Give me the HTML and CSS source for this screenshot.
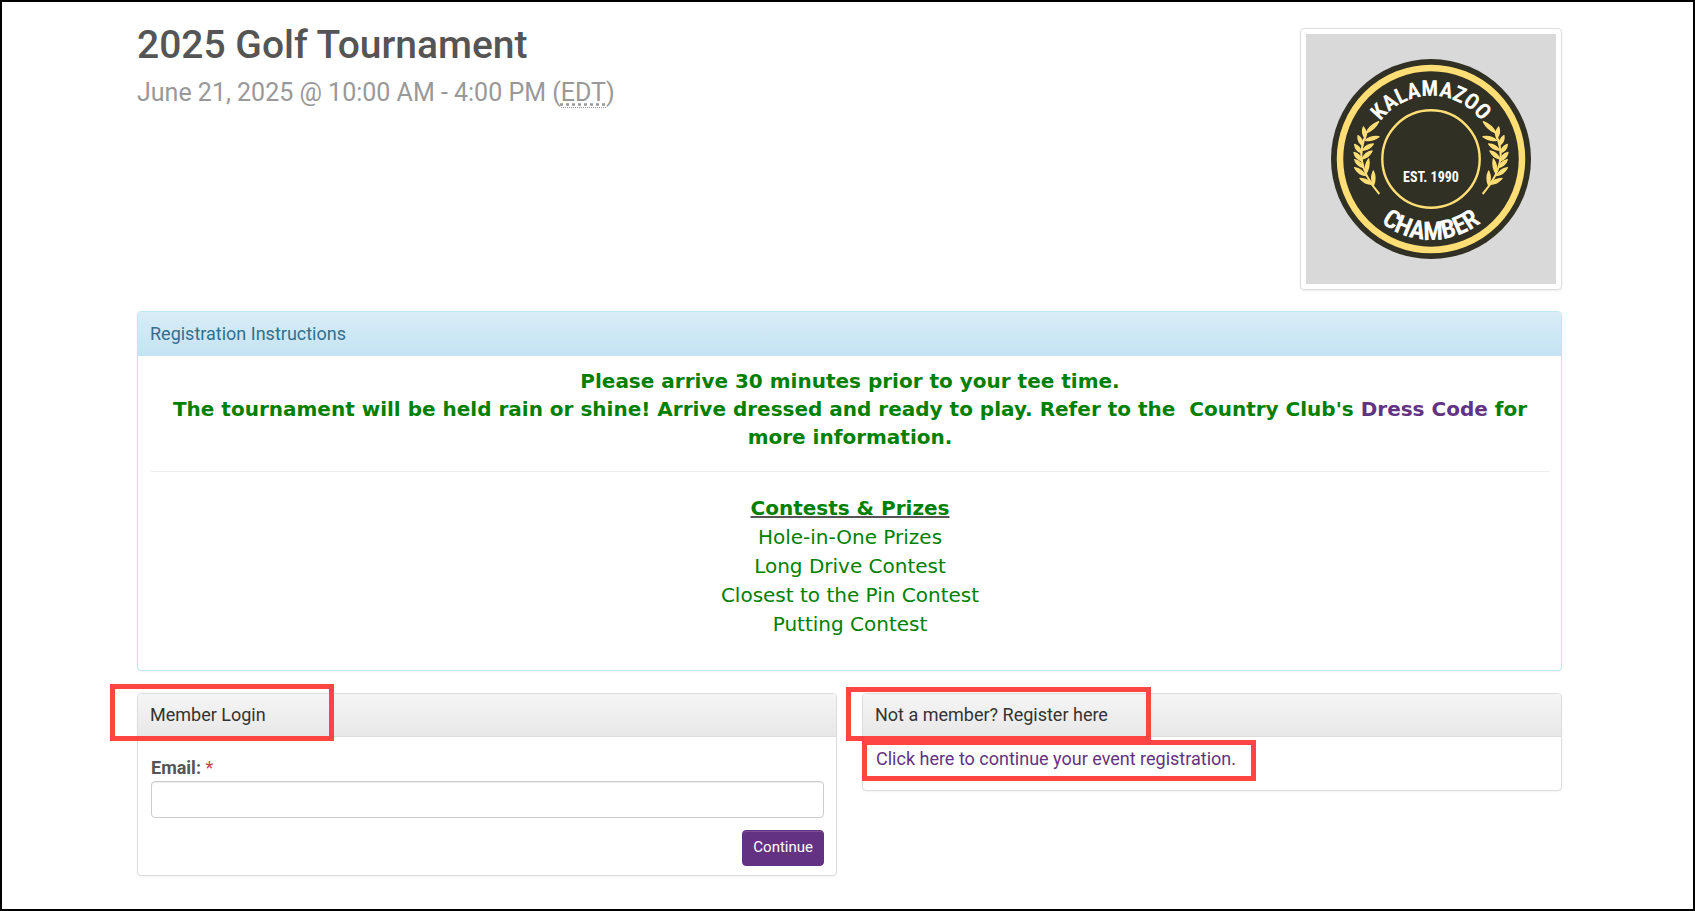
FILE: index.html
```html
<!DOCTYPE html>
<html lang="en">
<head>
<meta charset="utf-8">
<title>2025 Golf Tournament</title>
<meta name="viewport" content="width=device-width, initial-scale=1">
<link rel="stylesheet" href="styles.css">
</head>
<body>
<main class="page">
  <header class="event">
    <div class="event-text">
      <h1 class="event-title">2025 Golf Tournament</h1>
      <p class="event-date">June 21, 2025 @ 10:00 AM - 4:00 PM (<abbr class="zone" title="Eastern Daylight Time">EDT</abbr>)</p>
    </div>
    <div class="thumbnail">
      <svg class="logo" viewBox="0 0 250 250" role="img" aria-label="Kalamazoo Chamber, established 1990">
        <defs>
          <path id="arc-top" d="M62 125a63 63 0 0 1 126 0"/>
          <path id="arc-bottom" d="M44 125a81 81 0 0 0 162 0"/>
          <g id="laurel" transform="translate(44 81) scale(.3333)">
            <path fill="none" stroke="#ffdf75" stroke-width="6" d="M50 52Q30 100 35 134Q42 184 88 237"/>
            <path fill="#ffdf75" stroke="#ffdf75" stroke-width="4" stroke-linejoin="round" d="M48 54Q60 30 86 20Q74 44 48 54ZM46 76Q64 61 87 65Q68 79 46 76ZM46 70Q33 55 40 36Q53 51 46 70ZM38 92Q22 81 24 62Q40 73 38 92ZM38 106Q49 87 70 87Q59 105 38 106ZM35 114Q16 107 14 88Q32 95 35 114ZM36 132Q45 112 66 108Q57 128 36 132ZM36 138Q16 132 12 112Q32 118 36 138ZM40 158Q20 153 14 134Q34 139 40 158ZM47 178Q41 153 56 132Q61 157 47 178ZM46 182Q24 178 14 158Q36 162 46 182ZM70 212Q60 190 70 168Q80 190 70 212ZM66 208Q44 208 30 190Q52 190 66 208Z"/>
          </g>
        </defs>
        <circle cx="125" cy="125" r="100" fill="#313024"/>
        <circle cx="125" cy="125" r="91" fill="none" stroke="#ffdf75" stroke-width="6.5"/>
        <circle cx="125" cy="125" r="48.7" fill="none" stroke="#ffdf75" stroke-width="2.4"/>
        <use href="#laurel"/>
        <use href="#laurel" transform="translate(250 0) scale(-1 1)"/>
        <text class="logo-text logo-top"><textPath href="#arc-top" startOffset="50%">KALAMAZOO</textPath></text>
        <text class="logo-text logo-bottom"><textPath href="#arc-bottom" startOffset="50%">CHAMBER</textPath></text>
        <text class="logo-text logo-year" x="125" y="148">EST. 1990</text>
      </svg>
    </div>
  </header>

  <section class="panel panel-info">
    <h2 class="panel-heading">Registration Instructions</h2>
    <div class="panel-body instructions">
      <p class="notice">Please arrive 30 minutes prior to your tee time.<br>The tournament will be held rain or shine! Arrive dressed and ready to play. Refer to the&nbsp; Country Club's <a href="#">Dress Code</a> for more information.</p>
      <hr class="rule">
      <div class="contests">
        <h3 class="contests-title"><span>Contests &amp; Prizes</span></h3>
        <ul class="contest-list">
          <li>Hole-in-One Prizes</li>
          <li>Long Drive Contest</li>
          <li>Closest to the Pin Contest</li>
          <li>Putting Contest</li>
        </ul>
      </div>
    </div>
  </section>

  <div class="columns">
    <section class="panel">
      <h2 class="panel-heading">Member Login</h2>
      <span class="mark mark-login"></span>
      <form class="panel-body login">
        <label class="login-label" for="email">Email: <span class="required">*</span></label>
        <input class="login-input" id="email" type="email" required>
        <button class="button" type="submit">Continue</button>
      </form>
    </section>
    <section class="panel">
      <h2 class="panel-heading">Not a member? Register here</h2>
      <span class="mark mark-register"></span>
      <div class="panel-body register">
        <a href="#">Click here to continue your event registration.</a>
      </div>
      <span class="mark mark-link"></span>
    </section>
  </div>
</main>
</body>
</html>
```
FILE: styles.css
```css
*,
*::before,
*::after {
  box-sizing: border-box;
}

body {
  margin: 0;
  min-height: 100vh;
  border: 2px solid #000;
  background: #fff;
  color: #555;
  font: 18px/26px Roboto, "Liberation Sans", sans-serif;
}

a {
  color: #643282;
  text-decoration: none;
}

.page {
  padding: 20px 131px 32px 135px;
}

/* Event header */
.event {
  display: flex;
  justify-content: space-between;
  gap: 24px;
  margin-bottom: 21px;
}

.event-title {
  margin: 1px 0 0;
  font-size: 39px;
  font-weight: 500;
  line-height: 44px;
}

.event-date {
  margin: 8px 0 0;
  color: #999;
  font-size: 25px;
  line-height: 36px;
}

.zone {
  border-bottom: 1px dotted #999;
  text-decoration: underline dotted;
}

.thumbnail {
  flex: none;
  margin-top: 6px;
  padding: 5px;
  border: 1px solid #ddd;
  border-radius: 4px;
  box-shadow: 0 1px 2px rgba(0, 0, 0, .08);
}

.logo {
  display: block;
  width: 250px;
  height: 250px;
  background: #d9d9d9;
}

.logo-text {
  fill: #fff;
  font-family: "Liberation Sans Narrow", "Roboto Condensed", "Liberation Sans", sans-serif;
  font-weight: 700;
  text-anchor: middle;
}

.logo-top {
  font-size: 22px;
}

.logo-bottom {
  font-size: 26px;
}

.logo-year {
  font-size: 14px;
}

/* Panels */
.panel {
  position: relative;
  border: 1px solid #ddd;
  border-radius: 4px;
  background: #fff;
  box-shadow: 0 1px 2px rgba(0, 0, 0, .05);
}

.panel-heading {
  margin: 0;
  padding: 8px 12px;
  border-bottom: 1px solid #ddd;
  border-radius: 3px 3px 0 0;
  background: linear-gradient(#f5f5f5, #e8e8e8);
  color: #333;
  font-size: 18px;
  font-weight: 400;
  line-height: 26px;
}

.panel-body {
  padding: 12px 12px 12px 13px;
}

.panel-info {
  margin-bottom: 22px;
  border-color: #bce8f1;
}

.panel-info > .panel-heading {
  padding-top: 9px;
  border-bottom-color: #c4e3f3;
  background: linear-gradient(#d9edf7, #c4e3f3);
  color: #31708f;
}

.instructions {
  padding-top: 11px;
  color: #008000;
  font: 20px/29px "DejaVu Sans", sans-serif;
  text-align: center;
}

.notice {
  margin: 0;
  font-weight: 700;
  line-height: 28px;
}

.rule {
  margin: 20px 0 22px;
  border: 0;
  border-top: 1px solid #eee;
}

.contests-title {
  margin: 0;
  color: #555;
  font-size: 20px;
  text-decoration: underline;
}

.contests-title span {
  color: #008000;
}

.contest-list {
  margin: 0;
  padding: 0 0 19px;
  list-style: none;
}

.columns {
  display: grid;
  grid-template-columns: 1fr 1fr;
  align-items: start;
  gap: 25px;
}

/* Login form */
.login {
  display: flex;
  flex-direction: column;
  padding-top: 18px;
  padding-bottom: 9px;
}

.login-label {
  font-weight: 700;
}

.required {
  color: #b94a48;
  font-weight: 400;
}

.login-input {
  width: 100%;
  height: 37px;
  padding: 6px 12px;
  border: 1px solid #ccc;
  border-radius: 4px;
  box-shadow: inset 0 1px 1px rgba(0, 0, 0, .075);
  font: inherit;
}

.button {
  align-self: flex-end;
  height: 36px;
  margin-top: 12px;
  padding: 0 10px 2px;
  border: 1px solid #643282;
  border-radius: 4px;
  background: #643282;
  box-shadow: inset 0 1px 0 rgba(255, 255, 255, .15);
  color: #fff;
  font: 15px/20px Roboto, "Liberation Sans", sans-serif;
}

.register {
  padding-top: 9px;
  padding-bottom: 18px;
}

/* Highlight frames laid over the page */
.mark {
  position: absolute;
  border: 5px solid #ff4444;
  pointer-events: none;
}

.mark-login {
  top: -10px;
  left: -28px;
  width: 224px;
  height: 57px;
}

.mark-register {
  top: -7px;
  left: -17px;
  width: 305px;
  height: 54px;
}

.mark-link {
  top: 46px;
  left: -1px;
  width: 394px;
  height: 41px;
}
```
